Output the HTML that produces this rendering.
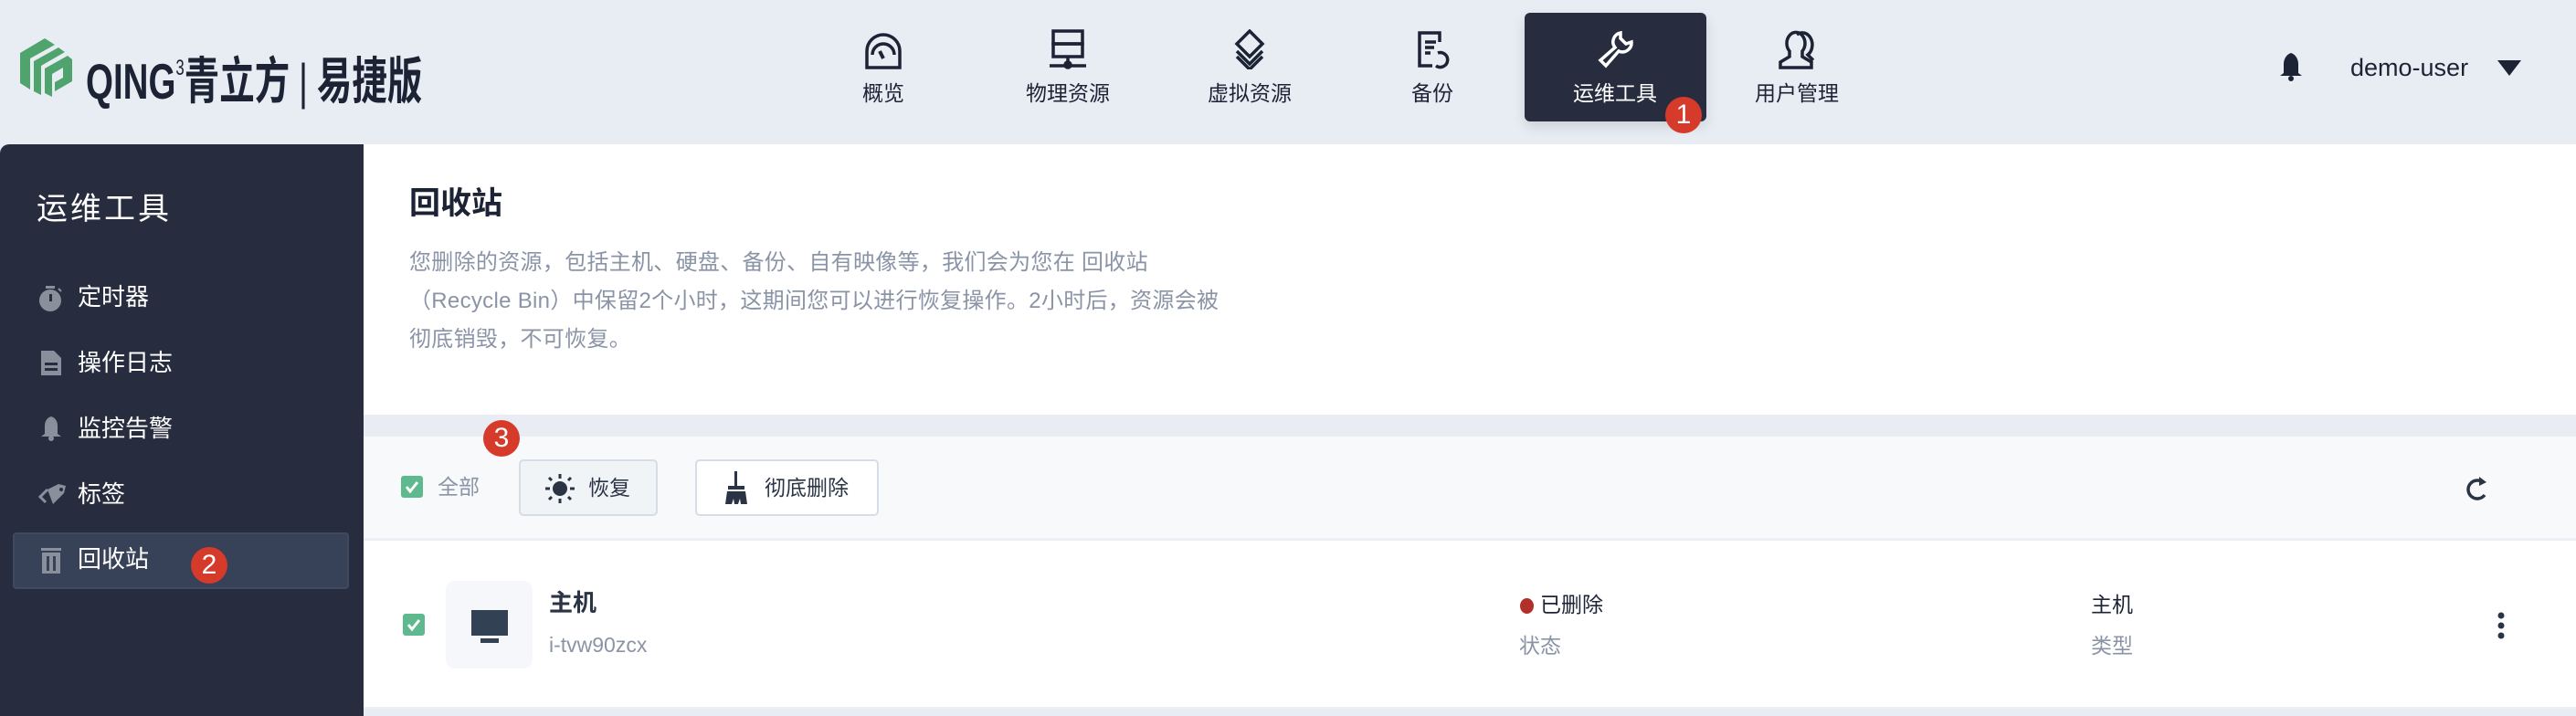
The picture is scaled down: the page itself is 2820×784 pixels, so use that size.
<!DOCTYPE html>
<html><head><meta charset="utf-8"><style>
*{margin:0;padding:0;box-sizing:border-box}
body{width:2820px;height:784px;overflow:hidden;background:#e8edf4;font-family:"Liberation Sans","Noto Sans CJK SC",sans-serif;position:relative}
.abs{position:absolute}
.nav{position:absolute;top:14px;width:200px;height:119px;text-align:center;color:#1c2334;font-size:23px}
.nav svg{position:absolute;left:78px;top:18px}
.nav span{position:absolute;left:0;right:0;top:74px;line-height:28px}
.badge{position:absolute;width:40px;height:40px;border-radius:50%;background:#d63a2a;color:#fff;font-size:30px;line-height:40px;text-align:center}
.side{position:absolute;left:0;top:158px;width:398px;height:626px;background:#272d3e;border-top-left-radius:10px}
.mi{position:absolute;left:85px;color:#fff;font-size:26px;line-height:30px}
.mic{position:absolute;left:42px}
.btn{position:absolute;top:503px;height:62px;border:2px solid #d6dde6;border-radius:5px;font-size:23px;color:#2b3445;line-height:58px}
</style></head><body>
<!-- logo -->
<svg class="abs" style="left:22px;top:42px" width="57" height="64" viewBox="0 0 57 64">
<g fill="#4fa46d">
<path d="M0 16 L27 0 L38 7 L11 22 L11 56 L0 49 Z"/>
<path d="M15 25 L42 10 L49 15 L23 30 L23 62 L15 58 Z"/>
<path d="M27 33 L52 19 L57 23 L57 47 L38 58 L38 48 L47 43 L47 32 L35 39 L35 64 L27 60 Z"/>
</g>
</svg>
<div class="abs" style="left:94px;top:44px;font-size:55px;color:#1c2334;line-height:62px;white-space:nowrap;transform:scaleX(0.7);transform-origin:left;font-weight:500"><b>QING</b><sup style="font-size:24px;vertical-align:26px">3</sup><b>青立方</b><span style="margin:0 14px;font-weight:normal">|</span><b>易捷版</b></div>

<div class="nav" style="left:867px"><svg width="44" height="44" viewBox="0 0 44 44" fill="none" stroke="#1c2334" stroke-width="3.5"><path d="M4 42 L4 24 A18 18 0 0 1 40 24 L40 42 Z"/><path d="M10 28 A12 12 0 0 1 34 28"/><path d="M18 24 L22 32" stroke-width="4"/></svg><span>概览</span></div>
<div class="nav" style="left:1069px"><svg width="44" height="44" viewBox="0 0 44 44" fill="none" stroke="#1c2334" stroke-width="3.5"><rect x="6" y="2" width="32" height="14"/><rect x="6" y="16" width="32" height="14"/><path d="M22 30V38M2 40H42"/><circle cx="22" cy="39" r="3" fill="#1c2334"/></svg><span>物理资源</span></div>
<div class="nav" style="left:1268px"><svg width="44" height="44" viewBox="0 0 44 44" fill="none" stroke="#1c2334" stroke-width="3.5"><path d="M22 2L36 16L22 30L8 16Z"/><path d="M8 24L22 38L36 24"/><path d="M8 30L22 44L36 30"/></svg><span>虚拟资源</span></div>
<div class="nav" style="left:1468px"><svg width="44" height="44" viewBox="0 0 44 44" fill="none" stroke="#1c2334" stroke-width="3.5"><path d="M30 14V4H8V40H22"/><path d="M14 14H26M14 20H24M14 26H20"/><path d="M28 26A8 8 0 1 1 26 40"/></svg><span>备份</span></div>
<div style="position:absolute;left:1669px;top:14px;width:199px;height:119px;background:#272d3e;border-radius:6px;box-shadow:0 6px 14px rgba(0,0,0,.12)"></div>
<div class="nav" style="left:1668px;color:#fff"><svg width="44" height="44" viewBox="0 0 44 44" fill="none" stroke="#fff" stroke-width="3.5"><path d="M28 4A10 10 0 0 0 22 20L6 34L12 40L26 24A10 10 0 0 0 40 14L34 16L28 10Z"/></svg><span>运维工具</span></div>
<div class="badge" style="left:1823px;top:106px">1</div>
<div class="nav" style="left:1867px"><svg width="44" height="44" viewBox="0 0 44 44" fill="none" stroke="#1c2334" stroke-width="3.5"><path d="M14 30V24A10 12 0 1 1 28 24V30L38 36V42H4V36Z"/><path d="M22 6A10 12 0 0 1 34 28L40 34"/></svg><span>用户管理</span></div>

<svg class="abs" style="left:2494px;top:56px" width="28" height="34" viewBox="0 0 28 34"><path d="M14 2C8 4 6 10 6 14V24L2 27H26L22 24V14C22 10 20 4 14 2Z" fill="#1c2334"/><circle cx="14" cy="30" r="3" fill="#1c2334"/></svg>
<div class="abs" style="left:2573px;top:58px;font-size:27px;color:#1c2334;line-height:32px">demo-user</div>
<svg class="abs" style="left:2734px;top:66px" width="26" height="18"><path d="M0 0H26L13 17Z" fill="#1c2334"/></svg>

<!-- sidebar -->
<div class="side"></div>
<div class="abs" style="left:40px;top:210px;font-size:34px;color:#fff;line-height:38px;letter-spacing:3px">运维工具</div>
<svg class="mic" style="top:312px" width="26" height="30" viewBox="0 0 26 30"><circle cx="13" cy="17" r="12" fill="#8a909b"/><rect x="8" y="1" width="10" height="3" fill="#8a909b"/><rect x="12" y="10" width="3" height="8" fill="#272d3e"/><path d="M22 4L25 7" stroke="#8a909b" stroke-width="2"/></svg>
<div class="mi" style="top:310px">定时器</div>
<svg class="mic" style="top:384px;left:45px" width="22" height="27"><path d="M0 0H14L22 8V27H0Z" fill="#8a909b"/><rect x="4" y="13" width="14" height="3" fill="#272d3e"/><rect x="4" y="19" width="14" height="3" fill="#272d3e"/></svg>
<div class="mi" style="top:382px">操作日志</div>
<svg class="mic" style="top:455px;left:45px" width="22" height="28"><path d="M11 1C5 3 4 8 4 12V20L0 23H22L18 20V12C18 8 17 3 11 1Z" fill="#8a909b"/><circle cx="11" cy="25" r="3" fill="#8a909b"/></svg>
<div class="mi" style="top:454px">监控告警</div>
<svg class="mic" style="top:530px" width="30" height="24"><path d="M10 6L22 0L30 2L28 10L16 22Z" fill="#8a909b"/><path d="M10 6L2 14L8 20" stroke="#8a909b" stroke-width="3" fill="none"/><circle cx="25" cy="6" r="2" fill="#272d3e"/></svg>
<div class="mi" style="top:526px">标签</div>
<div class="abs" style="left:14px;top:583px;width:368px;height:62px;background:#374157;border:2px solid #3f4a60;border-radius:4px"></div>
<svg class="mic" style="top:600px;left:45px" width="22" height="28"><rect x="0" y="0" width="22" height="3" fill="#8a909b"/><rect x="1" y="5" width="20" height="23" fill="#8a909b"/><rect x="6" y="9" width="3" height="16" fill="#374157"/><rect x="13" y="9" width="3" height="16" fill="#374157"/></svg>
<div class="mi" style="top:597px">回收站</div>
<div class="badge" style="left:209px;top:599px">2</div>

<!-- content -->
<div class="abs" style="left:398px;top:158px;width:2422px;height:296px;background:#fff"></div>
<div class="abs" style="left:448px;top:203px;font-size:34px;font-weight:bold;color:#1c2334;line-height:40px">回收站</div>
<div class="abs" style="left:448px;top:267px;font-size:24px;letter-spacing:0.3px;color:#8a94a6;line-height:42px;white-space:nowrap">您删除的资源，包括主机、硬盘、备份、自有映像等，我们会为您在 回收站<br>（Recycle Bin）中保留2个小时，这期间您可以进行恢复操作。2小时后，资源会被<br>彻底销毁，不可恢复。</div>
<div class="abs" style="left:398px;top:454px;width:2422px;height:24px;background:#e9edf3"></div>
<div class="abs" style="left:398px;top:478px;width:2422px;height:113px;background:#f7f9fb;border-bottom:2px solid #edf0f5"></div>
<div class="abs" style="left:439px;top:521px;width:24px;height:24px;background:#5fb98e;border-radius:3px"><svg width="24" height="24"><path d="M6 12L10 17L18 7" stroke="#fff" stroke-width="3" fill="none"/></svg></div>
<div class="abs" style="left:479px;top:518px;font-size:23px;color:#8a94a6;line-height:30px">全部</div>
<div class="btn" style="left:568px;width:152px;background:#f1f4f7;padding-left:74px">恢复</div>
<svg class="abs" style="left:596px;top:518px" width="34" height="34" viewBox="0 0 34 34"><circle cx="17" cy="17" r="8" fill="#2b3445"/><g stroke="#2b3445" stroke-width="3"><path d="M17 1V6M17 28V33M1 17H6M28 17H33M5 5L8 8M26 26L29 29M5 29L8 26M26 8L29 5"/></g></svg>
<div class="btn" style="left:761px;width:201px;background:#fff;padding-left:74px">彻底删除</div>
<svg class="abs" style="left:793px;top:516px" width="26" height="36"><rect x="11" y="0" width="3" height="16" fill="#2b3445"/><rect x="4" y="16" width="18" height="4" fill="#2b3445"/><path d="M3 22H23L25 36H18L17 30L15 36H11L10 30L8 36H1Z" fill="#2b3445"/></svg>
<div class="badge" style="left:529px;top:460px">3</div>
<svg class="abs" style="left:2698px;top:520px" width="28" height="30" viewBox="0 0 28 30"><path d="M20 8A10 10 0 1 0 22 22" stroke="#2b3445" stroke-width="3.5" fill="none"/><path d="M16 2L24 8L16 12Z" fill="#2b3445"/></svg>

<div class="abs" style="left:398px;top:592px;width:2422px;height:184px;background:#fff;border-bottom:2px solid #edf0f5"></div>
<div class="abs" style="left:441px;top:672px;width:24px;height:24px;background:#5fb98e;border-radius:3px"><svg width="24" height="24"><path d="M6 12L10 17L18 7" stroke="#fff" stroke-width="3" fill="none"/></svg></div>
<div class="abs" style="left:488px;top:636px;width:95px;height:96px;background:#f5f7fa;border-radius:10px"></div>
<div class="abs" style="left:516px;top:668px;width:40px;height:28px;background:#334155"></div>
<div class="abs" style="left:526px;top:699px;width:20px;height:5px;background:#334155"></div>
<div class="abs" style="left:601px;top:644px;font-size:26px;font-weight:bold;color:#2b3445;line-height:32px">主机</div>
<div class="abs" style="left:601px;top:692px;font-size:23px;color:#8a94a6;line-height:28px">i-tvw90zcx</div>
<div class="abs" style="left:1664px;top:655px;width:15px;height:17px;border-radius:50%;background:#b3302a"></div>
<div class="abs" style="left:1686px;top:647px;font-size:23px;color:#1c2334;line-height:30px">已删除</div>
<div class="abs" style="left:1663px;top:692px;font-size:23px;color:#8a94a6;line-height:30px">状态</div>
<div class="abs" style="left:2289px;top:647px;font-size:23px;color:#1c2334;line-height:30px">主机</div>
<div class="abs" style="left:2289px;top:692px;font-size:23px;color:#8a94a6;line-height:30px">类型</div>
<svg class="abs" style="left:2733px;top:670px" width="10" height="30"><circle cx="5" cy="4" r="3.5" fill="#2b3445"/><circle cx="5" cy="15" r="3.5" fill="#2b3445"/><circle cx="5" cy="26" r="3.5" fill="#2b3445"/></svg>
</body></html>
